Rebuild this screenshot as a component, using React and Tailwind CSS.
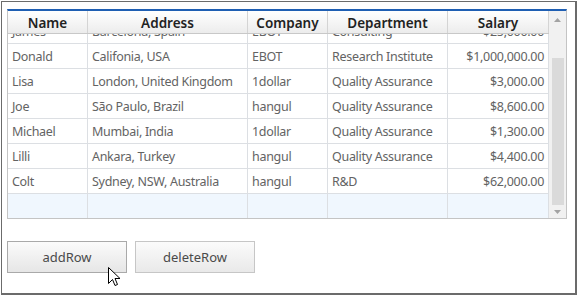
import React from "react";

const rows = [
  ["James", "Barcelona, Spain", "EBOT", "Consulting", "$25,000.00"],
  ["Donald", "Califonia, USA", "EBOT", "Research Institute", "$1,000,000.00"],
  ["Lisa", "London, United Kingdom", "1dollar", "Quality Assurance", "$3,000.00"],
  ["Joe", "São Paulo, Brazil", "hangul", "Quality Assurance", "$8,600.00"],
  ["Michael", "Mumbai, India", "1dollar", "Quality Assurance", "$1,300.00"],
  ["Lilli", "Ankara, Turkey", "hangul", "Quality Assurance", "$4,400.00"],
  ["Colt", "Sydney, NSW, Australia", "hangul", "R&D", "$62,000.00"],
];

const widths = ["w-[80px]", "w-[160px]", "w-[80px]", "w-[120px]", "w-[101px]"];
const headers = ["Name", "Address", "Company", "Department", "Salary"];

export default function App() {
  return (
    <div
      className="w-[578px] h-[296px] bg-white pl-px pt-px overflow-hidden"
      style={{ fontFamily: '"Noto Sans", "Open Sans", sans-serif' }}
    >
      <div className="w-[576px] h-[294px] border-l border-t border-r-2 border-b-2 border-[#6b6b6b] pl-[5px] pt-[7px]">
        {/* grid */}
        <div className="w-[560px] h-[210px] border-t-2 border-t-[#1f5fb3] border-l border-r border-b border-[#c4c4c4] flex">
          <div className="flex flex-col w-[541px]">
            {/* header */}
            <div className="flex h-[23px] border-b border-[#c8c8c8] bg-gradient-to-b from-white to-[#ececec] shrink-0">
              {headers.map((h, i) => (
                <div
                  key={h}
                  className={`${widths[i]} shrink-0 border-r border-[#d4d4d4] flex items-center justify-center pt-[3px] text-[13.5px] font-semibold text-[#222]`}
                >
                  {h}
                </div>
              ))}
            </div>
            {/* body */}
            <div className="flex-1 overflow-hidden">
              <div className="-mt-[15px]">
                {rows.map((r, ri) => (
                  <div key={ri} className="flex h-[25px] border-b border-[#dcdfe3]">
                    {r.map((c, i) => (
                      <div
                        key={i}
                        className={`${widths[i]} shrink-0 border-r border-[#dcdfe3] flex items-center px-[4px] pt-[2px] text-[12.5px] text-[#636363] whitespace-nowrap tracking-[-0.3px] ${i === 4 ? "justify-end" : ""}`}
                      >
                        {c}
                      </div>
                    ))}
                  </div>
                ))}
                <div className="flex h-[25px] bg-[#f0f7fe]">
                  {widths.map((w, i) => (
                    <div key={i} className={`${w} shrink-0 border-r border-[#dcdfe3]`} />
                  ))}
                </div>
              </div>
            </div>
          </div>
          {/* scrollbar */}
          <div className="w-[17px] bg-[#f1f1f1] flex flex-col items-center">
            <svg width="7" height="4" className="mt-[7px]" viewBox="0 0 7 4">
              <polygon points="3.5,0 7,4 0,4" fill="#a3a3a3" />
            </svg>
            <div className="w-[12px] h-[147px] bg-[#dadada] mt-[36px]" />
            <svg width="7" height="4" className="mt-[5px]" viewBox="0 0 7 4">
              <polygon points="0,0 7,0 3.5,4" fill="#a3a3a3" />
            </svg>
          </div>
        </div>
        {/* buttons */}
        <div className="flex gap-[8px] mt-[22px] relative">
          <button className="w-[120px] h-[32px] border border-[#a9a9a9] bg-gradient-to-b from-[#fbfbfb] to-[#e6e6e6] text-[13px] text-[#4a4a4a] pt-px">
            addRow
          </button>
          <button className="w-[120px] h-[32px] border border-[#c6c6c6] bg-gradient-to-b from-[#fbfbfb] to-[#e9e9e9] text-[13px] text-[#4a4a4a] pt-px">
            deleteRow
          </button>
          <svg
            className="absolute left-[101px] top-[26px]"
            width="13"
            height="21"
            viewBox="0 0 13 21"
          >
            <path
              d="M0.5 0.5 L0.5 16.5 L4.5 12.5 L7 18.5 L9.5 17.5 L7 11.5 L12 11.5 Z"
              fill="#fff"
              stroke="#000"
              strokeWidth="1"
              strokeLinejoin="miter"
            />
          </svg>
        </div>
      </div>
    </div>
  );
}
